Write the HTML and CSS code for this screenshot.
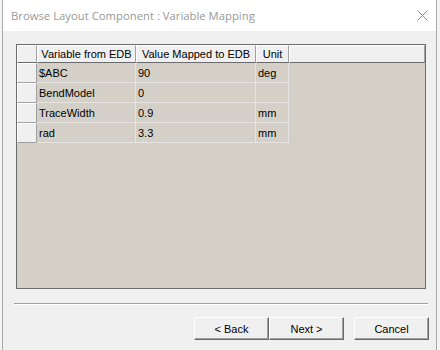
FILE: index.html
```html
<!DOCTYPE html>
<html>

<head>
    <meta charset="utf-8">
    <title>Variable Mapping</title>
    <link rel="stylesheet" href="styles.css">
</head>

<body>
    <div class="window">
        <div class="titlebar">
            <span class="title">Browse Layout Component : Variable Mapping</span>
            <svg class="close" width="11" height="11" viewBox="0 0 11 11">
                <path d="M0.5 0.5 L10.5 10.5 M10.5 0.5 L0.5 10.5" stroke="#8a8a8a" stroke-width="1" fill="none"/>
            </svg>
        </div>
        <div class="client">
            <div class="grid">
                <table class="mapping">
                    <colgroup>
                        <col class="c-row">
                        <col class="c-var">
                        <col class="c-val">
                        <col class="c-unit">
                        <col class="c-fill">
                    </colgroup>
                    <tr class="head">
                        <th class="corner"></th>
                        <th>Variable from EDB</th>
                        <th>Value Mapped to EDB</th>
                        <th>Unit</th>
                        <th class="filler"></th>
                    </tr>
                    <tr>
                        <th class="rowhead"></th>
                        <td>$ABC</td>
                        <td>90</td>
                        <td>deg</td>
                    </tr>
                    <tr>
                        <th class="rowhead"></th>
                        <td>BendModel</td>
                        <td>0</td>
                        <td></td>
                    </tr>
                    <tr>
                        <th class="rowhead"></th>
                        <td>TraceWidth</td>
                        <td>0.9</td>
                        <td>mm</td>
                    </tr>
                    <tr>
                        <th class="rowhead"></th>
                        <td>rad</td>
                        <td>3.3</td>
                        <td>mm</td>
                    </tr>
                </table>
            </div>
            <div class="separator"></div>
            <div class="buttons">
                <button class="btn">&lt; Back</button>
                <button class="btn">Next &gt;</button>
                <button class="btn cancel">Cancel</button>
            </div>
        </div>
    </div>
</body>

</html>
```

FILE: styles.css
```css
body {
    margin: 0;
    background-color: #f4f4f4;
    font-family: "Liberation Sans", Arial, sans-serif;
    font-size: 11px;
    color: #000;
}

.window {
    margin-left: 2px;
    width: 433px;
    height: 350px;
    border-left: 1px solid #a9a9a9;
    border-right: 1px solid #a9a9a9;
    background-color: #f0f0f0;
}

.titlebar {
    height: 31px;
    background-color: #ffffff;
    display: flex;
    align-items: center;
    padding-left: 8px;
    padding-right: 8px;
}

.title {
    flex: 1;
    font-family: "Open Sans", "Noto Sans", sans-serif;
    font-size: 11.3px;
    color: #999999;
    padding-bottom: 1px;
}

.client {
    padding-top: 13px;
}

.grid {
    margin-left: 13px;
    width: 408px;
    height: 243px;
    border: 1px solid #6b6b6b;
    background-color: #d4d0c8;
}

.mapping {
    table-layout: fixed;
    border-spacing: 0;
    width: 408px;
}

.c-row { width: 20px; }
.c-var { width: 99px; }
.c-val { width: 120px; }
.c-unit { width: 33px; }
.c-fill { width: 136px; }

.mapping th,
.mapping td {
    padding: 0;
    font-weight: normal;
    white-space: nowrap;
    overflow: hidden;
}

.head th {
    height: 16px;
    background-color: #f0f0f0;
    border-top: 1px solid #ffffff;
    border-left: 1px solid #ffffff;
    border-right: 1px solid #a0a0a0;
    border-bottom: 1px solid #6b6b6b;
    text-align: center;
}

.rowhead {
    height: 18px;
    background-color: #f0f0f0;
    border-top: 1px solid #ffffff;
    border-left: 1px solid #ffffff;
    border-right: 1px solid #a0a0a0;
    border-bottom: 1px solid #a0a0a0;
}

.mapping td {
    height: 19px;
    padding-left: 2px;
    border-right: 1px solid #e6e4e0;
    border-bottom: 1px solid #e6e4e0;
    text-align: left;
}

.separator {
    margin: 14px 8px 0 11px;
    height: 1px;
    background-color: #a0a0a0;
    border-bottom: 1px solid #ffffff;
}

.buttons {
    display: flex;
    justify-content: flex-end;
    padding-right: 7px;
    margin-top: 12px;
}

.btn {
    width: 75px;
    height: 23px;
    padding: 0;
    font-family: "Liberation Sans", Arial, sans-serif;
    font-size: 11px;
    color: #000;
    background-color: #f0f0f0;
    border: 1px solid;
    border-color: #ffffff #696969 #696969 #ffffff;
    box-shadow: inset -1px -1px 0 #a0a0a0;
}

.cancel {
    margin-left: 10px;
}
```
